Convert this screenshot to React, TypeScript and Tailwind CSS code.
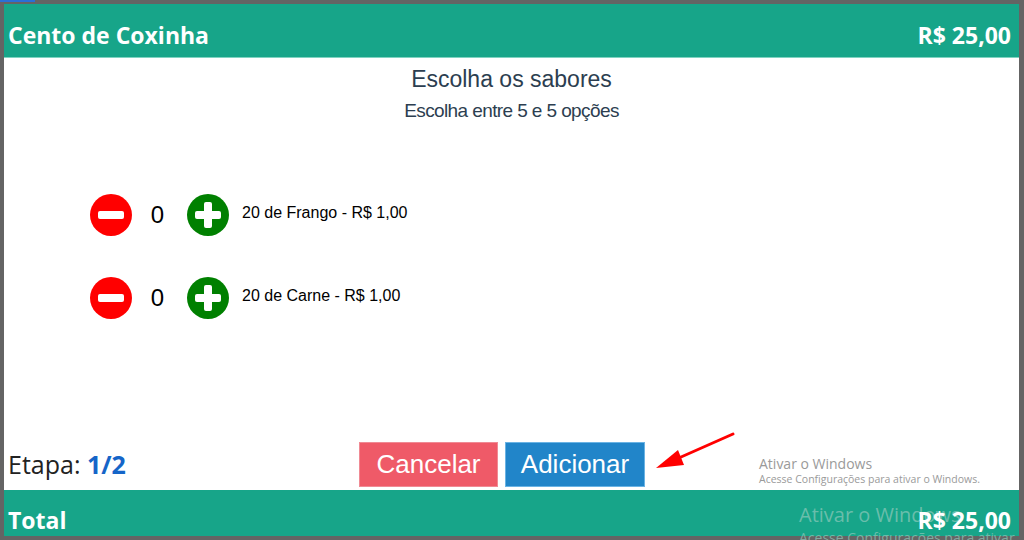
import React from "react";

function CircleBtn({ kind }: { kind: "minus" | "plus" }) {
  const bg = kind === "minus" ? "#ff0000" : "#008000";
  return (
    <svg width="42" height="42" viewBox="0 0 42 42">
      <circle cx="21" cy="21" r="21" fill={bg} />
      {kind === "minus" ? (
        <rect x="8" y="17" width="26" height="8" rx="2" fill="#fff" />
      ) : (
        <>
          <rect x="8" y="17" width="26" height="8" rx="2" fill="#fff" />
          <rect x="17" y="8" width="8" height="26" rx="2" fill="#fff" />
        </>
      )}
    </svg>
  );
}

function Row({ label }: { label: string }) {
  return (
    <div className="flex items-center">
      <CircleBtn kind="minus" />
      <div className="w-[55px] pr-[4px] text-center text-[24px] text-black leading-none">0</div>
      <CircleBtn kind="plus" />
      <div className="ml-[13px] -mt-[5px] text-[16px] text-black">{label}</div>
    </div>
  );
}

export default function App() {
  return (
    <div
      className="relative w-[1024px] h-[540px] bg-[#646464] pt-[4px] pl-[4px] pr-[5px] pb-[4px] overflow-hidden"
      style={{ fontFamily: '"Liberation Sans", Arial, sans-serif' }}
    >
      <div className="absolute left-0 top-0 w-[35px] h-[2px] bg-[#2a6fd6]" />
      <div className="flex flex-col h-full bg-white">
        <div
          className="h-[54px] bg-[#17a589] border-b border-[#7fd3c1] flex items-center justify-between pl-[4px] pr-[8px] pt-[9px] text-white font-bold text-[23px]"
          style={{ fontFamily: '"Open Sans", "Noto Sans", sans-serif' }}
        >
          <span>Cento de Coxinha</span>
          <span>R$ 25,00</span>
        </div>
        <div className="flex-1 flex flex-col">
          <div className="flex flex-col items-center text-[#2c3e50] pt-[6px]">
            <div className="text-[23px] leading-[30px]">Escolha os sabores</div>
            <div className="text-[19px] leading-[30px] tracking-[-0.6px] mt-[2px]">Escolha entre 5 e 5 opções</div>
          </div>
          <div className="flex flex-col gap-[41px] pl-[86px] mt-[68px]">
            <Row label="20 de Frango - R$ 1,00" />
            <Row label="20 de Carne - R$ 1,00" />
          </div>
          <div className="flex-1" />
          <div className="flex items-end h-[48px] pb-[3px]">
            <div
              className="w-[355px] pl-[4px] pb-[4px] text-[25px] text-[#222]"
              style={{ fontFamily: '"Open Sans", "Noto Sans", sans-serif' }}
            >
              Etapa: <span className="font-bold text-[#1565c8]">1/2</span>
            </div>
            <div className="flex gap-[7px]">
              <button className="w-[139px] h-[45px] bg-[#ef5a68] text-white text-[26px] border border-[#f08a94]">
                Cancelar
              </button>
              <button className="w-[140px] h-[45px] bg-[#2185c9] text-white text-[26px] border border-[#6ab3e4]">
                Adicionar
              </button>
            </div>
          </div>
        </div>
        <div
          className="h-[46px] bg-[#17a589] flex items-center justify-between pl-[4px] pr-[8px] pt-[14px] text-white font-bold text-[23px]"
          style={{ fontFamily: '"Open Sans", "Noto Sans", sans-serif' }}
        >
          <span>Total</span>
          <span className="relative z-10">R$ 25,00</span>
        </div>
      </div>

      {/* red arrow annotation */}
      <svg className="absolute left-[650px] top-[428px]" width="90" height="45" viewBox="0 0 90 45">
        <line x1="83" y1="6" x2="22" y2="33" stroke="#ff0000" strokeWidth="3" strokeLinecap="round" />
        <polygon points="6,40 28,22 34,37" fill="#ff0000" />
      </svg>

      {/* windows watermark */}
      <div
        className="absolute left-[759px] top-[455px] text-[#9a9a9a] leading-tight"
        style={{ fontFamily: '"Open Sans", "Noto Sans", sans-serif' }}
      >
        <div className="text-[14px]">Ativar o Windows</div>
        <div className="text-[10.5px]">Acesse Configurações para ativar o Windows.</div>
      </div>
      <div
        className="absolute left-[799px] top-[502px] text-[#8fc9bb]/70 leading-tight"
        style={{ fontFamily: '"Open Sans", "Noto Sans", sans-serif' }}
      >
        <div className="text-[20px]">Ativar o Windows</div>
        <div className="text-[14px] -mt-[2px] translate-y-[4px]">Acesse Configurações para ativar o Windows.</div>
      </div>
    </div>
  );
}
